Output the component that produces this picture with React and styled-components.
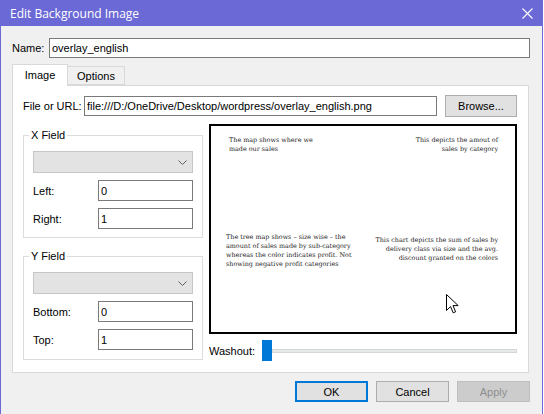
import React from 'react';
import styled, { createGlobalStyle } from 'styled-components';

const Global = createGlobalStyle`
  html, body { margin: 0; padding: 0; background: #ffffff; }
  body {
    font-family: "Liberation Sans", Arial, sans-serif;
    font-size: 11px;
    color: #000;
  }
  * { box-sizing: border-box; }
`;

const Window = styled.div`
  width: 543px;
  height: 414px;
  background: #f0f0f0;
  border-left: 1px solid #6b69d6;
  border-right: 1px solid #6b69d6;
  display: flex;
  flex-direction: column;
  overflow: hidden;
`;

const TitleBar = styled.div`
  height: 26px;
  flex: none;
  background: #6b69d6;
  display: flex;
  align-items: center;
  padding-left: 9px;
  color: #fff;
  font-family: "Open Sans", "Noto Sans", sans-serif;
  font-size: 12px;
`;

const Title = styled.span`
  flex: 1;
`;

const CloseBox = styled.div`
  width: 30px;
  height: 26px;
  display: flex;
  align-items: center;
  justify-content: center;
`;

const NameRow = styled.div`
  display: flex;
  align-items: center;
  padding: 12px 12px 0 11px;
`;

const Label = styled.span`
  flex: none;
  width: ${(p) => p.$w || 'auto'};
  white-space: nowrap;
`;

const TextBox = styled.input`
  font: inherit;
  color: #000;
  height: ${(p) => p.$h || 20}px;
  flex: 1;
  min-width: 0;
  border: 1px solid #7a7a7a;
  background: #fff;
  padding: 0 2px;
  margin: 0;
  outline: none;
`;

const TabStrip = styled.div`
  display: flex;
  align-items: flex-end;
  margin-top: 6px;
  padding-left: 11px;
  height: 21px;
  position: relative;
  z-index: 1;
`;

const Tab = styled.div`
  height: ${(p) => (p.$active ? 22 : 19)}px;
  width: ${(p) => p.$w}px;
  margin-bottom: ${(p) => (p.$active ? -1 : 0)}px;
  background: ${(p) => (p.$active ? '#fff' : '#f0f0f0')};
  border: 1px solid #d9d9d9;
  border-bottom: ${(p) => (p.$active ? 'none' : '1px solid #d9d9d9')};
  border-left: ${(p) => (p.$active ? '1px solid #d9d9d9' : 'none')};
  display: flex;
  align-items: center;
  justify-content: center;
  padding-bottom: ${(p) => (p.$active ? 2 : 0)}px;
`;

const Panel = styled.div`
  margin: 0 13px 0 11px;
  height: 288px;
  flex: none;
  background: #fff;
  border: 1px solid #d9d9d9;
  padding: 9px 10px 0 10px;
  display: flex;
  flex-direction: column;
`;

const FileRow = styled.div`
  display: flex;
  align-items: center;
  height: 22px;
  padding-right: 1px;
`;

const Button = styled.div`
  flex: none;
  width: ${(p) => p.$w || 73}px;
  height: ${(p) => p.$h || 21}px;
  display: flex;
  align-items: center;
  justify-content: center;
  background: ${(p) => (p.$disabled ? '#cccccc' : '#e1e1e1')};
  color: ${(p) => (p.$disabled ? '#8f8f8f' : '#000')};
  border: ${(p) =>
    p.$default ? '2px solid #0078d7' : p.$disabled ? '1px solid #bfbfbf' : '1px solid #adadad'};
  margin-left: ${(p) => p.$ml || 0}px;
`;

const Main = styled.div`
  margin-top: 7px;
  display: grid;
  grid-template-columns: 180px 308px;
  column-gap: 6px;
`;

const LeftCol = styled.div`
  display: flex;
  flex-direction: column;
`;

const Group = styled.fieldset`
  margin: ${(p) => p.$mt}px 0 0 0;
  min-width: 0;
  border: 1px solid #dcdcdc;
  padding: 9px 9px ${(p) => p.$pb}px 9px;
  display: flex;
  flex-direction: column;
  gap: 7px;
`;

const Legend = styled.legend`
  padding: 0 2px;
  margin-left: -4px;
  font-size: 11px;
  line-height: 13px;
`;

const Combo = styled.div`
  height: 22px;
  background: #e3e3e3;
  border: 1px solid #c6c6c6;
  display: flex;
  align-items: center;
  justify-content: flex-end;
  padding-right: 5px;
`;

const FieldRow = styled.div`
  display: flex;
  align-items: center;
  height: 21px;
`;

const RightCol = styled.div`
  display: flex;
  flex-direction: column;
`;

const Preview = styled.div`
  position: relative;
  height: 210px;
  border: 2px solid #000;
  background: #fff;
  display: grid;
  grid-template-columns: 1fr 1fr;
  grid-template-rows: 97px auto;
  padding-top: 10px;
  font-family: "DejaVu Serif", "Liberation Serif", serif;
  font-size: 6.4px;
  line-height: 9px;
  color: #262626;
`;

const Note = styled.div`
  white-space: nowrap;
  text-align: ${(p) => (p.$right ? 'right' : 'left')};
  margin-left: ${(p) => p.$ml || 0}px;
  margin-right: ${(p) => p.$mr || 0}px;
  margin-top: ${(p) => p.$mt || 0}px;
`;

const Cursor = styled.svg`
  position: absolute;
  left: 235px;
  top: 168px;
`;

const WashRow = styled.div`
  margin-top: 6px;
  height: 21px;
  display: flex;
  align-items: center;
`;

const Thumb = styled.div`
  width: 10px;
  height: 21px;
  background: #0078d7;
  flex: none;
`;

const Track = styled.div`
  flex: 1;
  height: 4px;
  background: #e7eaea;
  border: 1px solid #d6d6d6;
`;

const ButtonRow = styled.div`
  display: flex;
  justify-content: flex-end;
  gap: 8px;
  padding: 8px 12px 0 0;
`;

const Chevron = () => (
  <svg width="9" height="5" viewBox="0 0 9 5">
    <polyline points="0.5,0.5 4.5,4.5 8.5,0.5" fill="none" stroke="#606060" strokeWidth="1" />
  </svg>
);

function FieldGroup({ title, rows, mt, pb }) {
  return (
    <Group $mt={mt} $pb={pb}>
      <Legend>{title}</Legend>
      <Combo>
        <Chevron />
      </Combo>
      {rows.map(([label, value]) => (
        <FieldRow key={label}>
          <Label $w="65px">{label}</Label>
          <TextBox $h={21} defaultValue={value} readOnly />
        </FieldRow>
      ))}
    </Group>
  );
}

export default function App() {
  return (
    <>
      <Global />
      <Window>
        <TitleBar>
          <Title>Edit Background Image</Title>
          <CloseBox>
            <svg width="11" height="11" viewBox="0 0 11 11">
              <path d="M0.5 0.5 L10.5 10.5 M10.5 0.5 L0.5 10.5" stroke="#fff" strokeWidth="1.1" />
            </svg>
          </CloseBox>
        </TitleBar>

        <NameRow>
          <Label $w="37px">Name:</Label>
          <TextBox $h={20} defaultValue="overlay_english" readOnly />
        </NameRow>

        <TabStrip>
          <Tab $active $w={56}>Image</Tab>
          <Tab $w={57}>Options</Tab>
        </TabStrip>

        <Panel>
          <FileRow>
            <Label $w="61px">File or URL:</Label>
            <TextBox
              $h={20}
              defaultValue="file:///D:/OneDrive/Desktop/wordpress/overlay_english.png"
              readOnly
            />
            <Button $w={72} $h={22} $ml={8}>Browse...</Button>
          </FileRow>

          <Main>
            <LeftCol>
              <FieldGroup title="X Field" mt={5} pb={8} rows={[['Left:', '0'], ['Right:', '1']]} />
              <FieldGroup title="Y Field" mt={12} pb={9} rows={[['Bottom:', '0'], ['Top:', '1']]} />
            </LeftCol>

            <RightCol>
              <Preview>
                <Note $ml={18}>
                  The map shows where we
                  <br />
                  made our sales
                </Note>
                <Note $right $mr={17}>
                  This depicts the amout of
                  <br />
                  sales by category
                </Note>
                <Note $ml={15}>
                  The tree map shows – size wise – the
                  <br />
                  amount of sales made by sub-category
                  <br />
                  whereas the color indicates profit. Not
                  <br />
                  showing negative profit categories
                </Note>
                <Note $right $mr={17} $mt={3}>
                  This chart depicts the sum of sales by
                  <br />
                  delivery class via size and the avg.
                  <br />
                  discount granted on the colors
                </Note>
                <Cursor width="13" height="20" viewBox="0 0 13 20">
                  <path
                    d="M0.5 0.5 L0.5 16.5 L4.5 12.5 L7.2 18.8 L9.6 17.8 L7 11.6 L12.2 11.6 Z"
                    fill="#fff"
                    stroke="#000"
                    strokeWidth="1"
                    strokeLinejoin="miter"
                  />
                </Cursor>
              </Preview>
              <WashRow>
                <Label $w="53px">Washout:</Label>
                <Thumb />
                <Track />
              </WashRow>
            </RightCol>
          </Main>
        </Panel>

        <ButtonRow>
          <Button $default>OK</Button>
          <Button>Cancel</Button>
          <Button $disabled>Apply</Button>
        </ButtonRow>
      </Window>
    </>
  );
}
